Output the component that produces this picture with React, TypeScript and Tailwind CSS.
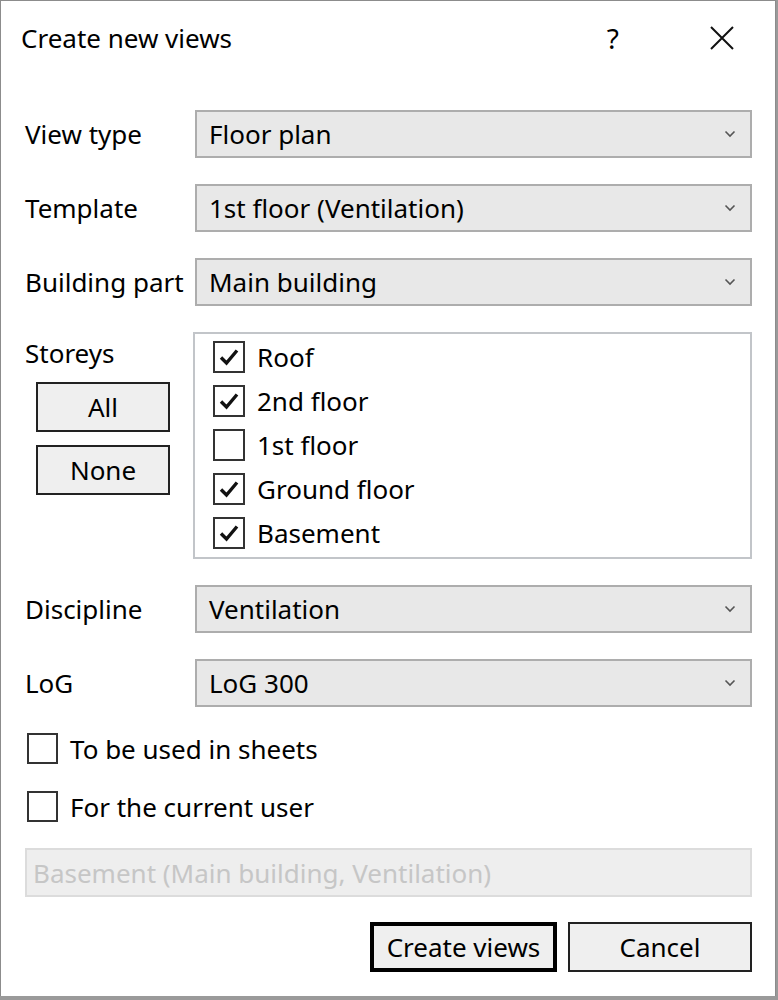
const FONT = { fontFamily: '"Noto Sans", "Segoe UI", sans-serif' };

const storeys = [
  { name: 'Roof', checked: true },
  { name: '2nd floor', checked: true },
  { name: '1st floor', checked: false },
  { name: 'Ground floor', checked: true },
  { name: 'Basement', checked: true },
];

function Chevron() {
  return (
    <svg width="12" height="8" viewBox="0 0 12 8" className="shrink-0">
      <path d="M1.5 1.5 L6 6 L10.5 1.5" fill="none" stroke="#555" strokeWidth="1.6" />
    </svg>
  );
}

function Select({ value }: { value: string }) {
  return (
    <div className="flex h-[48px] flex-1 items-center justify-between border-2 border-[#adadad] bg-[#e8e8e8] pl-[12px] pr-[14px] text-[26px] leading-none text-black">
      <span>{value}</span>
      <Chevron />
    </div>
  );
}

function Row({ label, value }: { label: string; value: string }) {
  return (
    <div className="flex items-center">
      <div className="w-[170px] shrink-0 text-[26px] leading-none text-black">{label}</div>
      <Select value={value} />
    </div>
  );
}

function Box({ checked, small = false }: { checked: boolean; small?: boolean }) {
  return (
    <div
      className={
        small
          ? 'flex h-[31px] w-[31px] shrink-0 items-center justify-center border-2 border-[#333] bg-white'
          : 'flex h-[32px] w-[32px] shrink-0 items-center justify-center border-2 border-[#333] bg-white'
      }
    >
      {checked && (
        <svg width="22" height="20" viewBox="0 0 22 20">
          <path d="M3 10.5 L8.5 16 L19 3.5" fill="none" stroke="#111" strokeWidth="3.4" strokeLinejoin="miter" />
        </svg>
      )}
    </div>
  );
}

function Button({ label, isDefault = false, className = '' }: { label: string; isDefault?: boolean; className?: string }) {
  return (
    <button
      type="button"
      className={
        (isDefault ? 'border-[4px] border-black ' : 'border-2 border-[#222] ') +
        'flex h-[50px] items-center justify-center bg-[#efefef] text-[26px] leading-none text-black ' +
        className
      }
    >
      {label}
    </button>
  );
}

export default function App() {
  return (
    <div className="h-[1000px] w-[778px] bg-[#9a9a9a]" style={FONT}>
      <div className="flex h-[996px] w-[776px] flex-col border border-b-0 border-[#8c8c8c] bg-white">
        <div className="flex h-[73px] shrink-0 items-center pl-[20px]">
          <span className="text-[26px] leading-none text-black">Create new views</span>
          <span className="ml-auto mr-[90px] text-[28px] leading-none text-black">?</span>
          <svg width="26" height="26" viewBox="0 0 26 26" className="mr-[40px]">
            <path d="M2 2 L24 24 M24 2 L2 24" stroke="#111" strokeWidth="2" />
          </svg>
        </div>

        <div className="flex flex-col gap-[26px] pl-[24px] pr-[23px] pt-[36px]">
          <Row label="View type" value="Floor plan" />
          <Row label="Template" value="1st floor (Ventilation)" />
          <Row label="Building part" value="Main building" />

          <div className="flex">
            <div className="flex w-[168px] shrink-0 flex-col">
              <div className="mt-[5px] h-[32px] text-[26px] leading-[32px] text-black">Storeys</div>
              <Button label="All" className="ml-[11px] mt-[13px] w-[134px]" />
              <Button label="None" className="ml-[11px] mt-[13px] w-[134px]" />
            </div>
            <div className="flex h-[227px] flex-1 flex-col gap-[12px] border-2 border-[#c2c5c9] bg-white pl-[18px] pt-[7px]">
              {storeys.map((s) => (
                <div key={s.name} className="flex h-[32px] items-center gap-[12px] text-[26px] leading-none text-black">
                  <Box checked={s.checked} />
                  <span>{s.name}</span>
                </div>
              ))}
            </div>
          </div>

          <Row label="Discipline" value="Ventilation" />
          <Row label="LoG" value="LoG 300" />

          <div className="flex flex-col gap-[27px]">
            <div className="flex h-[31px] items-center gap-[12px] pl-[2px] text-[26px] leading-none text-black">
              <Box checked={false} small />
              <span>To be used in sheets</span>
            </div>
            <div className="flex h-[31px] items-center gap-[12px] pl-[2px] text-[26px] leading-none text-black">
              <Box checked={false} small />
              <span>For the current user</span>
            </div>
          </div>

          <div className="flex h-[49px] items-center border-2 border-[#dcdcdc] bg-[#eeeeee] pl-[6px] text-[26px] leading-none text-[#c6c6c6]">
            Basement (Main building, Ventilation)
          </div>

          <div className="-mt-[1px] flex justify-end gap-[11px]">
            <Button label="Create views" isDefault className="w-[187px]" />
            <Button label="Cancel" className="w-[184px]" />
          </div>
        </div>
      </div>
    </div>
  );
}
